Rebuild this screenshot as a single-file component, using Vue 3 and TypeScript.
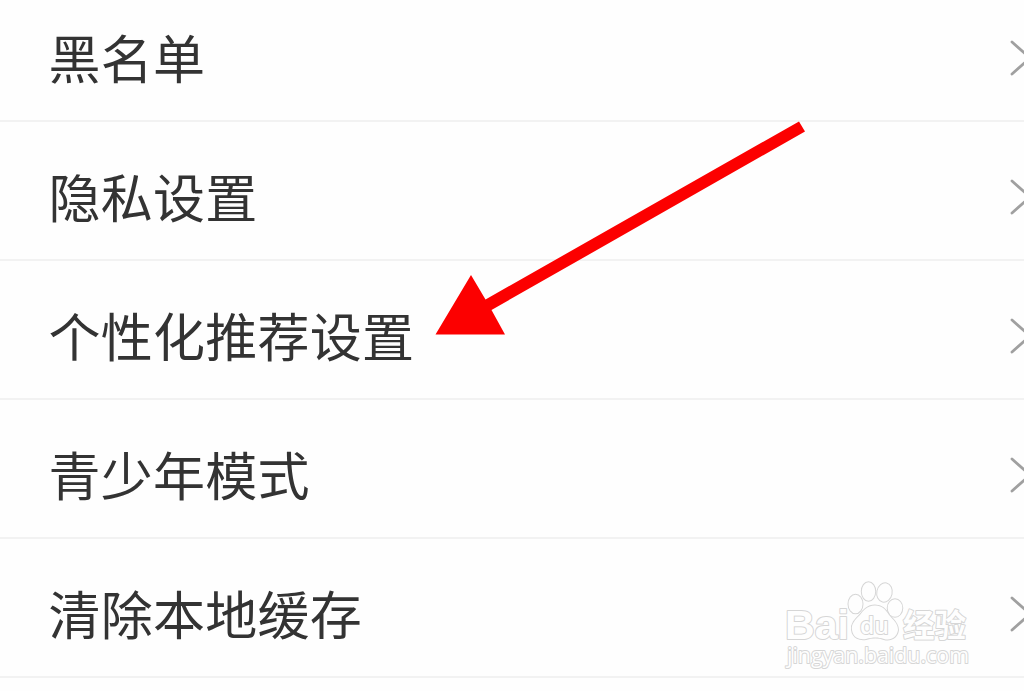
<script setup lang="ts">
const items: string[] = ['黑名单', '隐私设置', '个性化推荐设置', '青少年模式', '清除本地缓存']
</script>

<template>
  <main class="screen">
    <ul class="list">
      <li v-for="item in items" :key="item" class="row">
        <span class="label">{{ item }}</span>
        <svg class="chevron" width="24" height="40" viewBox="0 0 24 40" aria-hidden="true">
          <path d="M2 4 L20 20 L2 36" />
        </svg>
      </li>
    </ul>

    <svg class="arrow" width="380" height="224" viewBox="430 116 380 224" aria-hidden="true">
      <path d="M799 121.5 L805 131.5 L491.5 310 L505 334.5 H435.5 L471 275 L485.5 299.5 Z" />
    </svg>

    <svg class="watermark" width="200" height="100" viewBox="780 575 200 100">
      <g class="outline">
        <text x="785" y="638.5" class="latin" textLength="64" lengthAdjust="spacingAndGlyphs">Bai</text>
        <ellipse cx="855.5" cy="604" rx="7" ry="9.3" />
        <ellipse cx="868.5" cy="591.5" rx="6.7" ry="9.3" />
        <ellipse cx="884.5" cy="592.5" rx="7.2" ry="9.2" transform="rotate(12 884.5 592.5)" />
        <ellipse cx="895" cy="608" rx="7.3" ry="8.7" />
        <path d="M875 605.5 C867 605.5 863 611 860 615 C855 620 851 624 852 630 C853 638 860 640 866 639 C873 637 878 637 884 639 C891 641 897 637 898 630 C898 623 893 620 889 615 C885 609 882 605.5 875 605.5 Z" />
        <text x="860" y="634" class="du" textLength="29" lengthAdjust="spacingAndGlyphs">du</text>
        <text x="903" y="636.5" class="cjk" textLength="63" lengthAdjust="spacingAndGlyphs">经验</text>
        <text x="787" y="662.5" class="domain" textLength="182" lengthAdjust="spacingAndGlyphs">jingyan.baidu.com</text>
      </g>
    </svg>
  </main>
</template>

<style>
body {
  margin: 0;
  background: #fefefe;
}
</style>

<style scoped>
.screen {
  position: relative;
  width: 1024px;
  height: 691px;
  overflow: hidden;
  background: #fefefe;
  font-family: "Noto Sans CJK SC", sans-serif;
}

.list {
  margin: -17px 0 0;
  padding: 0;
  list-style: none;
}

.row {
  display: flex;
  align-items: center;
  justify-content: space-between;
  box-sizing: border-box;
  height: 139px;
  padding: 11px 0 0 48.6px;
  border-bottom: 2px solid #f2f2f2;
}

.label {
  color: #333;
  font-size: 52px;
  line-height: 76px;
  letter-spacing: 0.25px;
  white-space: nowrap;
}

.chevron {
  flex: none;
  margin: 1px -9.5px 0 0;
}

.chevron path {
  fill: none;
  stroke: #a0a0a0;
  stroke-width: 2.8;
  stroke-linecap: round;
}

.arrow {
  position: absolute;
  left: 430px;
  top: 116px;
}

.arrow path {
  fill: #fc0000;
}

.watermark {
  position: absolute;
  left: 780px;
  top: 575px;
}

.outline > * {
  fill: #fefefe;
  stroke: #d6d6d6;
  stroke-width: 2;
  stroke-linejoin: round;
  paint-order: stroke;
}

.outline > .latin {
  font: bold 41px "Liberation Sans", sans-serif;
}

.outline > .du {
  font: 600 24px "Open Sans", sans-serif;
}

.outline > .cjk {
  font: bold 32px "Noto Sans CJK SC", sans-serif;
}

.outline > .domain {
  font: 22px "Open Sans", sans-serif;
}
</style>
